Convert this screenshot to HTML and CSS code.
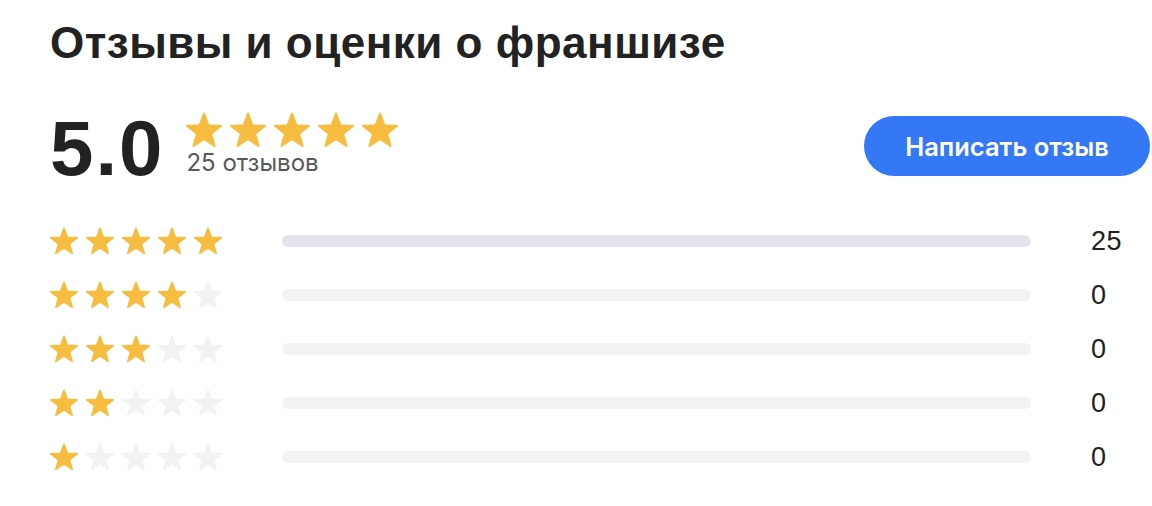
FILE: index.html
```html
<!DOCTYPE html>
<html lang="ru">
<head>
    <meta charset="UTF-8">
    <meta name="viewport" content="width=device-width, initial-scale=1.0">
    <title>Отзывы и оценки о франшизе</title>
    <link rel="stylesheet" href="styles.css">
</head>
<body>
    <!-- one star shape, reused by every rating row -->
    <svg class="sprite" aria-hidden="true">
        <symbol id="star" viewBox="0.9 0.9 22.2 22.2">
            <path d="M12 1.9L14.7 9.18 22.46 9.5 16.37 14.32 18.47 21.8 12 17.5 5.53 21.8 7.63 14.32 1.54 9.5 9.3 9.18Z"/>
        </symbol>
    </svg>

    <section class="reviews">
        <h2 class="reviews-title">Отзывы и оценки о франшизе</h2>

        <div class="summary">
            <div class="summary-score">5.0</div>
            <div class="summary-meta">
                <div class="stars stars-lg">
                    <svg class="on"><use href="#star"/></svg>
                    <svg class="on"><use href="#star"/></svg>
                    <svg class="on"><use href="#star"/></svg>
                    <svg class="on"><use href="#star"/></svg>
                    <svg class="on"><use href="#star"/></svg>
                </div>
                <div class="summary-count">25 отзывов</div>
            </div>
            <button class="btn-review">Написать отзыв</button>
        </div>

        <ul class="breakdown">
            <li class="breakdown-row">
                <div class="stars">
                    <svg class="on"><use href="#star"/></svg>
                    <svg class="on"><use href="#star"/></svg>
                    <svg class="on"><use href="#star"/></svg>
                    <svg class="on"><use href="#star"/></svg>
                    <svg class="on"><use href="#star"/></svg>
                </div>
                <div class="bar"><div class="bar-fill" style="width: 100%"></div></div>
                <span class="breakdown-num">25</span>
            </li>
            <li class="breakdown-row">
                <div class="stars">
                    <svg class="on"><use href="#star"/></svg>
                    <svg class="on"><use href="#star"/></svg>
                    <svg class="on"><use href="#star"/></svg>
                    <svg class="on"><use href="#star"/></svg>
                    <svg><use href="#star"/></svg>
                </div>
                <div class="bar"><div class="bar-fill" style="width: 0%"></div></div>
                <span class="breakdown-num">0</span>
            </li>
            <li class="breakdown-row">
                <div class="stars">
                    <svg class="on"><use href="#star"/></svg>
                    <svg class="on"><use href="#star"/></svg>
                    <svg class="on"><use href="#star"/></svg>
                    <svg><use href="#star"/></svg>
                    <svg><use href="#star"/></svg>
                </div>
                <div class="bar"><div class="bar-fill" style="width: 0%"></div></div>
                <span class="breakdown-num">0</span>
            </li>
            <li class="breakdown-row">
                <div class="stars">
                    <svg class="on"><use href="#star"/></svg>
                    <svg class="on"><use href="#star"/></svg>
                    <svg><use href="#star"/></svg>
                    <svg><use href="#star"/></svg>
                    <svg><use href="#star"/></svg>
                </div>
                <div class="bar"><div class="bar-fill" style="width: 0%"></div></div>
                <span class="breakdown-num">0</span>
            </li>
            <li class="breakdown-row">
                <div class="stars">
                    <svg class="on"><use href="#star"/></svg>
                    <svg><use href="#star"/></svg>
                    <svg><use href="#star"/></svg>
                    <svg><use href="#star"/></svg>
                    <svg><use href="#star"/></svg>
                </div>
                <div class="bar"><div class="bar-fill" style="width: 0%"></div></div>
                <span class="breakdown-num">0</span>
            </li>
        </ul>
    </section>
</body>
</html>
```

FILE: styles.css
```css
body {
    margin: 0;
    padding: 0;
    background-color: #fff;
    color: #222;
    font-family: "Liberation Sans", Arial, sans-serif;
}
.sprite {
    display: none;
}
.reviews {
    padding: 18px 2px 0 50px;
}
.reviews-title {
    margin: 0;
    font-size: 44px;
    line-height: 50px;
    font-weight: 700;
    letter-spacing: 0.5px;
    color: #222;
}

/* score block */
.summary {
    display: flex;
    align-items: flex-start;
    margin-top: 41px;
}
.summary-score {
    font-size: 78px;
    line-height: 78px;
    font-weight: 700;
    letter-spacing: 2px;
    color: #222;
}
.summary-meta {
    margin-left: 22px;
    margin-top: 3px;
}
.summary-count {
    margin-top: 1px;
    font-family: Inter, "Noto Sans", sans-serif;
    font-size: 24px;
    line-height: 28px;
    color: #585858;
}
.btn-review {
    margin-left: auto;
    margin-top: 7px;
    width: 286px;
    height: 60px;
    border: none;
    border-radius: 30px;
    background-color: #3478f6;
    color: #fff;
    font-family: Inter, "Noto Sans", sans-serif;
    font-size: 25.5px;
    font-weight: 600;
    cursor: pointer;
}
.btn-review:hover {
    background-color: #2a68de;
}

/* stars */
.stars {
    display: flex;
    gap: 8px;
}
.stars svg {
    width: 28px;
    height: 28px;
    fill: #f2f2f5;
    stroke: #f2f2f5;
    stroke-width: 1.3;
    stroke-linejoin: round;
}
.stars svg.on {
    fill: #f6bd41;
    stroke: #f6bd41;
}
.stars-lg svg {
    width: 36px;
    height: 36px;
}

/* per-star breakdown */
.breakdown {
    list-style: none;
    margin: 27px 0 0;
    padding: 0;
}
.breakdown-row {
    display: grid;
    grid-template-columns: 172px 1fr 59px;
    column-gap: 60px;
    align-items: center;
    height: 54px;
}
.bar {
    height: 12px;
    border-radius: 6px;
    background-color: #f3f3f6;
    overflow: hidden;
}
.bar-fill {
    height: 100%;
    border-radius: 6px;
    background-color: #e3e3ec;
}
.breakdown-num {
    font-size: 27px;
    letter-spacing: 0.5px;
    color: #222;
}
```
